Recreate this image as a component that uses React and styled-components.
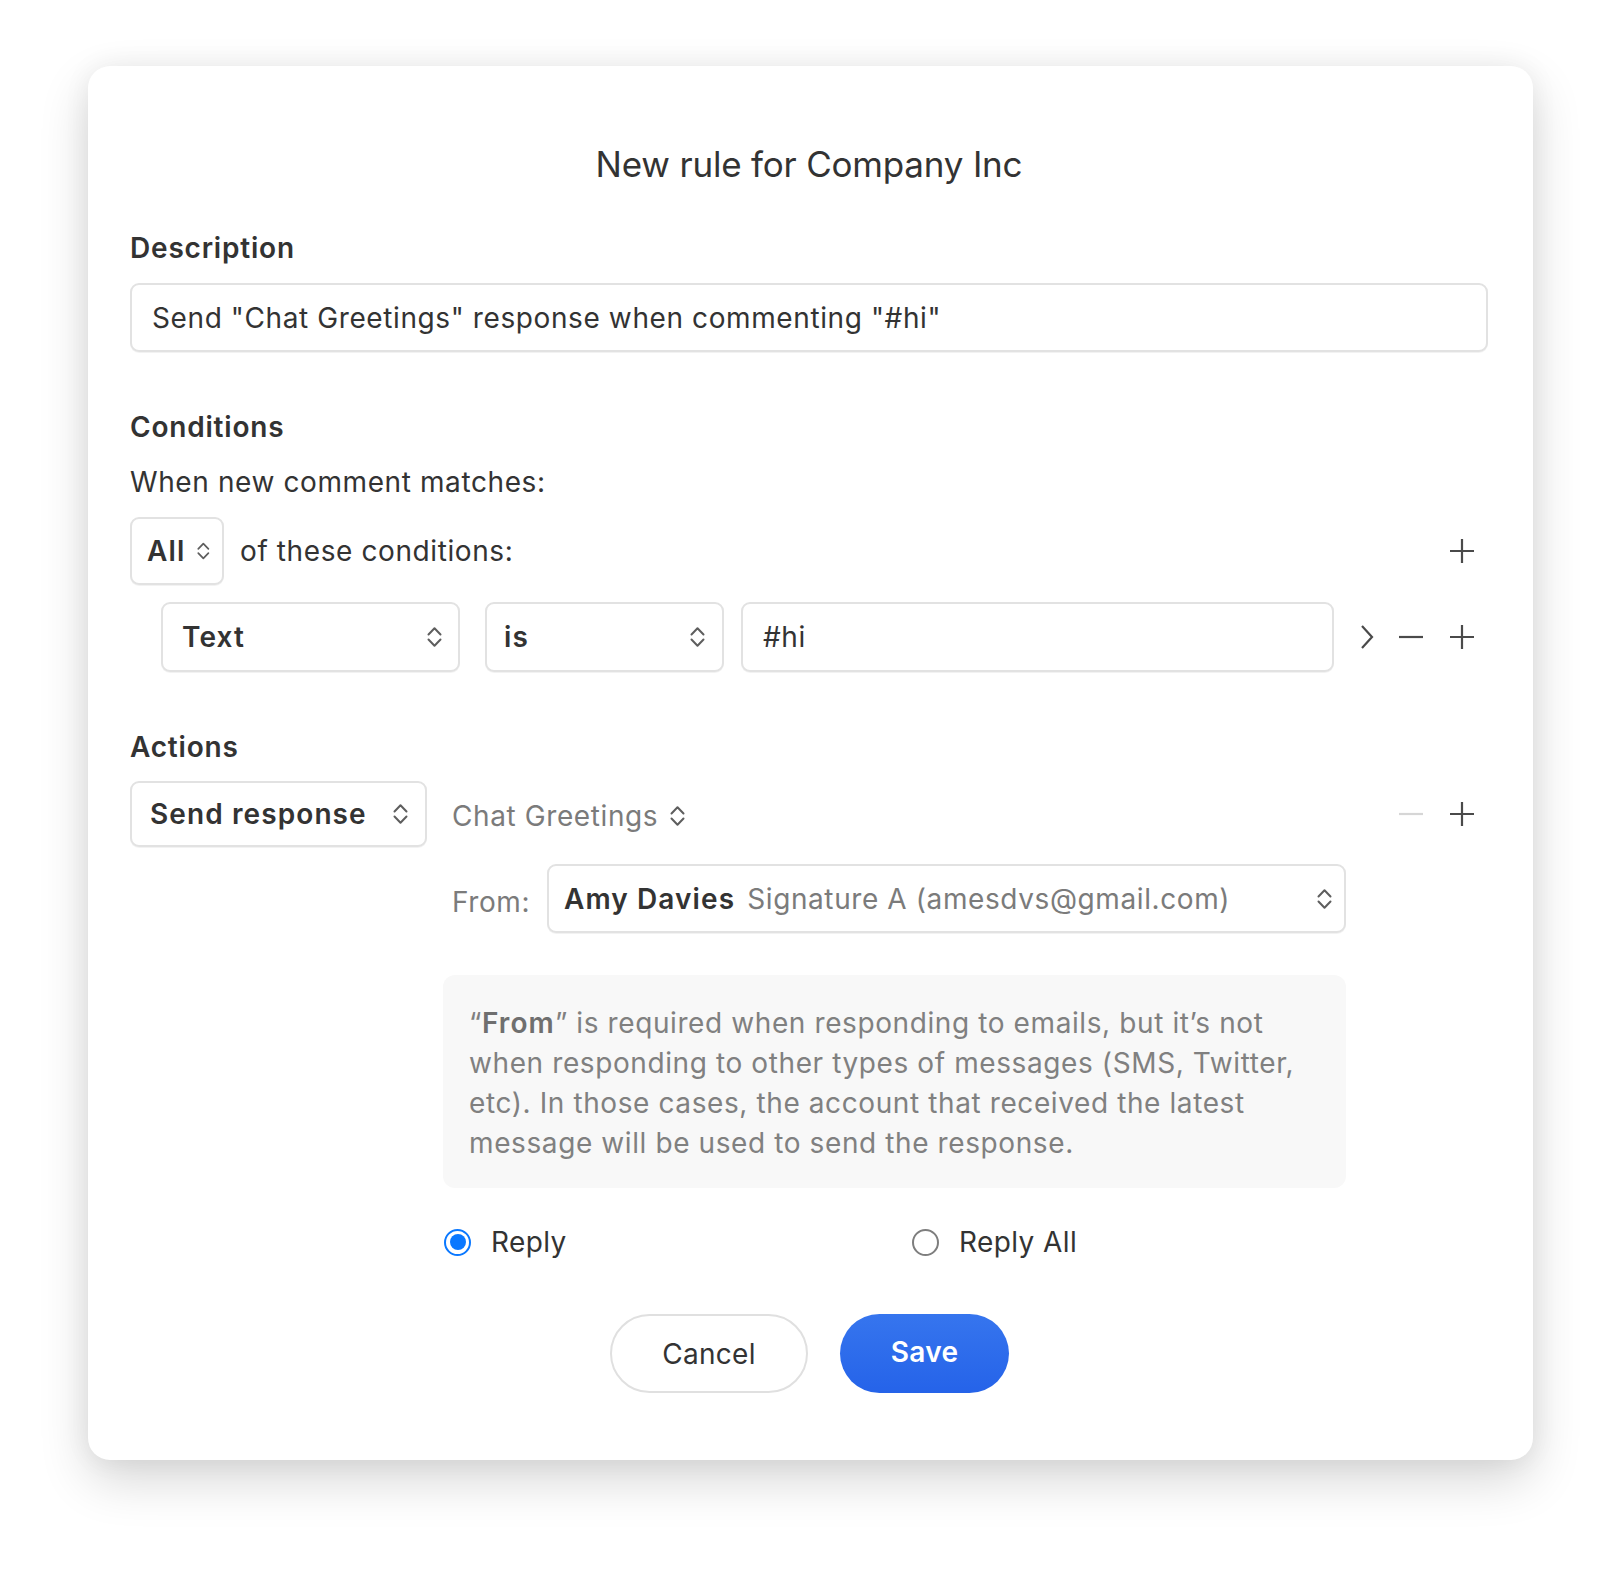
import React from "react";
import styled, { createGlobalStyle } from "styled-components";

const Global = createGlobalStyle`
  html, body { margin: 0; padding: 0; background: #ffffff; }
  body {
    font-family: Inter, "Noto Sans", "Liberation Sans", sans-serif;
    color: #333333;
    -webkit-font-smoothing: antialiased;
  }
  * { box-sizing: border-box; }
`;

const LS = "0.6px";
const LS_BOLD = "1.1px";

const Page = styled.div`
  width: 1618px;
  min-height: 1572px;
  padding-top: 66px;
  display: flex;
  justify-content: center;
  align-items: flex-start;
  padding-left: 3px;
`;

const Card = styled.div`
  width: 1445px;
  background: #ffffff;
  border-radius: 22px;
  box-shadow: 0 20px 50px rgba(0, 0, 0, 0.16), 0 0 28px rgba(0, 0, 0, 0.06);
  padding: 77px 45px 67px 42px;
  display: flex;
  flex-direction: column;
`;

const Title = styled.h1`
  margin: 0;
  font-size: 35px;
  line-height: 42px;
  font-weight: 400;
  text-align: center;
  color: #333;
  letter-spacing: -0.2px;
`;

const SectionLabel = styled.div`
  margin-top: ${(p) => p.$mt}px;
  font-size: 28px;
  line-height: 34px;
  font-weight: 600;
  color: #333;
  letter-spacing: 0.8px;
`;

const BodyText = styled.div`
  margin-top: ${(p) => p.$mt || 0}px;
  margin-left: ${(p) => p.$ml || 0}px;
  font-size: 28px;
  line-height: 34px;
  color: #333;
  letter-spacing: ${LS};
`;

const Field = styled.div`
  height: ${(p) => p.$h || 68}px;
  border: 2px solid #e2e2e2;
  border-radius: 9px;
  box-shadow: 0 1px 0 rgba(0, 0, 0, 0.05);
  background: #fff;
  display: flex;
  align-items: center;
  font-size: 28px;
  color: #333;
  letter-spacing: ${LS};
  white-space: nowrap;
`;

const TextField = styled(Field)`
  margin-top: ${(p) => p.$mt || 0}px;
  margin-left: ${(p) => p.$ml || 0}px;
  padding-left: 20px;
  flex: ${(p) => (p.$grow ? 1 : "none")};
`;

const Select = styled(Field)`
  width: ${(p) => p.$w}px;
  margin-left: ${(p) => p.$ml || 0}px;
  padding: 0 ${(p) => p.$pr}px 0 ${(p) => p.$pl}px;
  justify-content: space-between;
  font-weight: 600;
  letter-spacing: ${LS_BOLD};
  gap: 12px;
`;

const Row = styled.div`
  margin-top: ${(p) => p.$mt}px;
  display: flex;
  align-items: center;
  padding-left: ${(p) => p.$indent || 0}px;
`;

const Spacer = styled.div`
  flex: 1;
`;

const Icons = styled.div`
  display: flex;
  align-items: center;
  height: ${(p) => (p.$h ? `${p.$h}px` : "auto")};
  justify-content: flex-end;
  margin-left: ${(p) => p.$ml || 0}px;
  margin-right: 13px;
`;

const IconBtn = styled.span`
  display: inline-flex;
  align-items: center;
  justify-content: center;
  margin-left: ${(p) => p.$ml || 0}px;
  color: ${(p) => (p.$muted ? "#d6d6d6" : "#4a4a4a")};
`;

const ActionGrid = styled.div`
  margin-top: 17px;
  display: grid;
  grid-template-columns: 297px 903px 1fr;
  column-gap: 16px;
  align-items: start;
`;

const RightCol = styled.div`
  display: flex;
  flex-direction: column;
`;

const InlineSelect = styled.div`
  height: 66px;
  display: flex;
  align-items: center;
  padding-left: 9px;
  padding-top: 4px;
  font-size: 28px;
  color: #7b7b7b;
  gap: 12px;
  letter-spacing: ${LS};
`;

const FromRow = styled.div`
  margin-top: 17px;
  display: flex;
  align-items: center;
`;

const FromLabel = styled.div`
  width: 104px;
  padding-left: 9px;
  padding-top: 6px;
  font-size: 28px;
  color: #7b7b7b;
  letter-spacing: ${LS};
`;

const FromSelect = styled(Field)`
  flex: 1;
  height: 69px;
  padding: 0 12px 0 15px;
`;

const Strong = styled.span`
  font-weight: 600;
  color: #333;
  letter-spacing: ${LS_BOLD};
`;

const Muted = styled.span`
  color: #7b7b7b;
  margin-left: 12px;
  flex: 1;
`;

const InfoBox = styled.div`
  margin-top: 42px;
  background: #f8f8f8;
  border-radius: 12px;
  padding: 28px 10px 25px 26px;
  font-size: 28px;
  line-height: 40px;
  color: #808080;
  letter-spacing: ${LS};
  white-space: nowrap;
`;

const InfoStrong = styled.b`
  font-weight: 600;
  color: #6f6f6f;
  letter-spacing: ${LS_BOLD};
`;

const RadioRow = styled.div`
  margin-top: 37px;
  display: grid;
  grid-template-columns: 468px 1fr;
  height: 34px;
  align-items: center;
`;

const RadioLabel = styled.label`
  display: flex;
  align-items: center;
  gap: 20px;
  font-size: 28px;
  color: #333;
  letter-spacing: 0.4px;
  padding-left: 1px;
`;

const RadioDot = styled.span`
  width: 27px;
  height: 27px;
  border-radius: 50%;
  border: 2px solid ${(p) => (p.$on ? "#0a78ff" : "#7e7e7e")};
  display: inline-flex;
  align-items: center;
  justify-content: center;
  &::after {
    content: "";
    width: 16px;
    height: 16px;
    border-radius: 50%;
    background: ${(p) => (p.$on ? "#0a78ff" : "transparent")};
  }
`;

const ButtonRow = styled.div`
  margin-top: 55px;
  display: flex;
  justify-content: center;
  gap: 32px;
  padding-left: 1px;
`;

const Button = styled.button`
  height: 79px;
  width: ${(p) => p.$w}px;
  border-radius: 40px;
  font-family: inherit;
  font-size: 28px;
  letter-spacing: 0.3px;
  cursor: pointer;
  border: ${(p) => (p.$primary ? "none" : "2px solid #e0e0e0")};
  background: ${(p) =>
    p.$primary ? "linear-gradient(180deg, #3675ee 0%, #2563e9 100%)" : "#fff"};
  color: ${(p) => (p.$primary ? "#fff" : "#333")};
  font-weight: ${(p) => (p.$primary ? 600 : 400)};
  padding: 0 0 ${(p) => (p.$primary ? 4 : 0)}px;
`;

const UpDown = () => (
  <svg width="15" height="22" viewBox="0 0 15 22" fill="none">
    <path d="M1.5 8.5 L7.5 2.2 L13.5 8.5" stroke="#5e5e5e" strokeWidth="2" strokeLinecap="round" strokeLinejoin="round" />
    <path d="M1.5 13.5 L7.5 19.8 L13.5 13.5" stroke="#5e5e5e" strokeWidth="2" strokeLinecap="round" strokeLinejoin="round" />
  </svg>
);

const Plus = () => (
  <svg width="26" height="26" viewBox="0 0 26 26">
    <path d="M13 1 V25 M1 13 H25" stroke="currentColor" strokeWidth="2.2" />
  </svg>
);

const Minus = () => (
  <svg width="24" height="26" viewBox="0 0 24 26">
    <path d="M0 13 H24" stroke="currentColor" strokeWidth="2.2" />
  </svg>
);

const Chevron = () => (
  <svg width="14" height="26" viewBox="0 0 14 26" fill="none">
    <path d="M2 2 L12 13 L2 24" stroke="currentColor" strokeWidth="2.2" strokeLinejoin="miter" />
  </svg>
);

export default function App() {
  return (
    <>
      <Global />
      <Page>
        <Card>
          <Title>New rule for Company Inc</Title>

          <SectionLabel $mt={46}>Description</SectionLabel>
          <TextField $mt={18} $h={69}>
            Send "Chat Greetings" response when commenting "#hi"
          </TextField>

          <SectionLabel $mt={58}>Conditions</SectionLabel>
          <BodyText $mt={21}>When new comment matches:</BodyText>

          <Row $mt={18}>
            <Select $w={94} $pl={15} $pr={12} $h={68}>
              All
              <UpDown />
            </Select>
            <BodyText $ml={16}>of these conditions:</BodyText>
            <Spacer />
            <Icons>
              <IconBtn>
                <Plus />
              </IconBtn>
            </Icons>
          </Row>

          <Row $mt={17} $indent={31}>
            <Select $w={299} $pl={19} $pr={16} $h={70}>
              Text
              <UpDown />
            </Select>
            <Select $w={239} $pl={17} $pr={17} $h={70} $ml={25}>
              is
              <UpDown />
            </Select>
            <TextField $grow $h={70} $ml={17}>
              #hi
            </TextField>
            <Icons $ml={26}>
              <IconBtn>
                <Chevron />
              </IconBtn>
              <IconBtn $ml={25}>
                <Minus />
              </IconBtn>
              <IconBtn $ml={26}>
                <Plus />
              </IconBtn>
            </Icons>
          </Row>

          <SectionLabel $mt={58}>Actions</SectionLabel>

          <ActionGrid>
            <Select $w={297} $pl={18} $pr={17} $h={66}>
              Send response
              <UpDown />
            </Select>
            <RightCol>
              <InlineSelect>
                Chat Greetings
                <UpDown />
              </InlineSelect>
              <FromRow>
                <FromLabel>From:</FromLabel>
                <FromSelect>
                  <Strong>Amy Davies</Strong>
                  <Muted>Signature A (amesdvs@gmail.com)</Muted>
                  <UpDown />
                </FromSelect>
              </FromRow>
              <InfoBox>
                “<InfoStrong>From</InfoStrong>” is required when responding to emails, but it’s not
                <br />
                when responding to other types of messages (SMS, Twitter,
                <br />
                etc). In those cases, the account that received the latest
                <br />
                message will be used to send the response.
              </InfoBox>
              <RadioRow>
                <RadioLabel>
                  <RadioDot $on />
                  Reply
                </RadioLabel>
                <RadioLabel>
                  <RadioDot />
                  Reply All
                </RadioLabel>
              </RadioRow>
            </RightCol>
            <Icons $h={66}>
              <IconBtn $muted>
                <Minus />
              </IconBtn>
              <IconBtn $ml={26}>
                <Plus />
              </IconBtn>
            </Icons>
          </ActionGrid>

          <ButtonRow>
            <Button $w={198}>Cancel</Button>
            <Button $w={169} $primary>
              Save
            </Button>
          </ButtonRow>
        </Card>
      </Page>
    </>
  );
}
